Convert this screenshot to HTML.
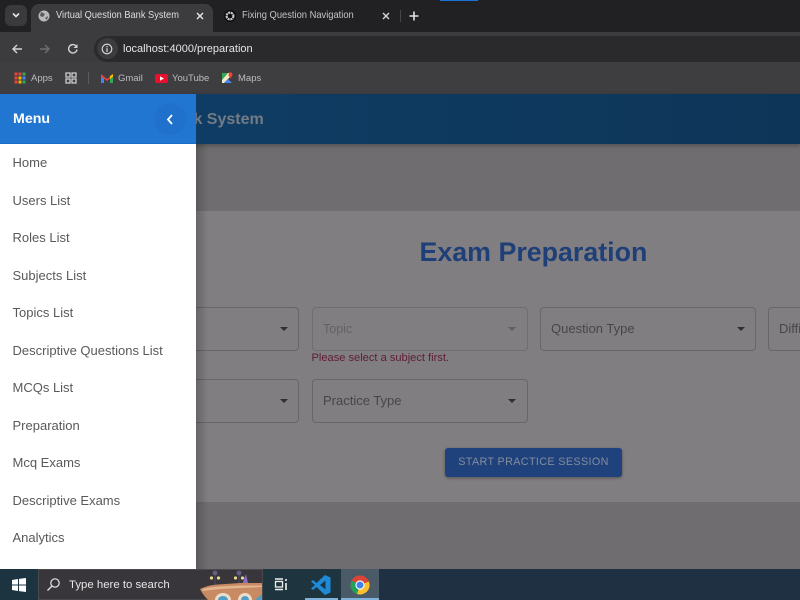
<!DOCTYPE html>
<html><head><meta charset="utf-8"><style>
*{box-sizing:border-box;margin:0;padding:0}
html,body{width:800px;height:600px;overflow:hidden;background:#6f6d6f;font-family:"Liberation Sans",sans-serif}
.a{position:absolute}
.t{position:absolute;white-space:nowrap}
.sx{transform-origin:0 50%;transform:scaleX(.9)}
.field{position:absolute;border:1px solid #68666a;border-radius:4px;height:44px}
.caret{position:absolute;width:0;height:0;border-left:4px solid transparent;border-right:4px solid transparent;border-top:4px solid #2f2e31}
.lbl{position:absolute;font-size:14px;line-height:16px;color:#464548;white-space:nowrap}
.m{position:absolute;left:12.5px;font-size:13px;line-height:16px;color:#595959;white-space:nowrap}
.bm{position:absolute;top:71.5px;font-size:9.5px;line-height:14px;color:#bdbcbd;white-space:nowrap}
</style></head><body>
<!-- tab strip -->
<div class="a" style="left:0;top:0;width:800px;height:32px;background:#212023"></div>
<div class="a" style="left:440px;top:0;width:38px;height:1px;background:#1a73d8"></div>
<div class="a" style="left:5px;top:5px;width:22px;height:21px;background:#3a393c;border-radius:6px"></div>
<svg class="a" style="left:11px;top:12px" width="10" height="7"><path d="M2 1.5 L5 4.5 L8 1.5" stroke="#e6e6e6" stroke-width="1.6" fill="none"/></svg>
<div class="a" style="left:31px;top:4px;width:182px;height:28px;background:#3c3b3e;border-radius:8px 8px 0 0"></div>
<svg class="a" style="left:38px;top:10px" width="12" height="12"><circle cx="6" cy="6" r="5.5" fill="#b9b9ba"/><path d="M3 2 L7 4 L5 7 L2 6Z M7 8 L10 6 L9 10Z" fill="#5a595c"/></svg>
<div class="t sx" style="left:56px;top:9px;font-size:10.3px;line-height:14px;color:#dedede">Virtual Question Bank System</div>
<svg class="a" style="left:195px;top:11px" width="10" height="10"><path d="M2 2 L8 8 M8 2 L2 8" stroke="#e8e8e8" stroke-width="1.4"/></svg>
<svg class="a" style="left:224px;top:10px" width="12" height="12"><circle cx="6" cy="6" r="6" fill="#0d0d0d"/><circle cx="6" cy="6" r="3.4" fill="none" stroke="#c4c4c4" stroke-width="2.2" stroke-dasharray="2.2 .6"/></svg>
<div class="t sx" style="left:242px;top:9px;font-size:10.4px;line-height:14px;color:#c4c4c5">Fixing Question Navigation</div>
<svg class="a" style="left:381px;top:11px" width="10" height="10"><path d="M2 2 L8 8 M8 2 L2 8" stroke="#d8d8d8" stroke-width="1.4"/></svg>
<div class="a" style="left:400px;top:10px;width:1px;height:12px;background:#47464a"></div>
<svg class="a" style="left:408px;top:10px" width="12" height="12"><path d="M6 1.5 V10.5 M1.5 6 H10.5" stroke="#e2e2e2" stroke-width="1.6"/></svg>
<!-- toolbar -->
<div class="a" style="left:0;top:32px;width:800px;height:30px;background:#3c3b3e"></div>
<svg class="a" style="left:11px;top:43px" width="12" height="12"><path d="M11 6 H2 M6 2 L2 6 L6 10" stroke="#d4d4d4" stroke-width="1.4" fill="none"/></svg>
<svg class="a" style="left:39px;top:43px" width="12" height="12"><path d="M1 6 H10 M6 2 L10 6 L6 10" stroke="#6f6e71" stroke-width="1.4" fill="none"/></svg>
<svg class="a" style="left:67px;top:43px" width="12" height="12"><path d="M10 6.5 A4.2 4.2 0 1 1 8.8 2.8" stroke="#d4d4d4" stroke-width="1.4" fill="none"/><path d="M10.5 1 V5 H6.5Z" fill="#d4d4d4"/></svg>
<div class="a" style="left:94px;top:36px;width:706px;height:26px;background:#2a292c;border-radius:13px 0 0 13px"></div>
<div class="a" style="left:97px;top:38px;width:21px;height:21px;background:#3c3b3e;border-radius:50%"></div>
<svg class="a" style="left:101px;top:43px" width="12" height="12"><circle cx="6" cy="6" r="4.8" stroke="#dcdcdc" stroke-width="1.1" fill="none"/><path d="M6 5.2 V9 M6 3 V4.2" stroke="#dcdcdc" stroke-width="1.2"/></svg>
<div class="t" style="left:123px;top:42px;font-size:11px;line-height:14px;color:#e6e6e6">localhost:4000/preparation</div>
<!-- bookmarks -->
<div class="a" style="left:0;top:62px;width:800px;height:32px;background:#3e3d40"></div>
<svg class="a" style="left:14px;top:72px" width="12" height="12"><path d="M.5 .5h3v3h-3zM.5 4.5h3v3h-3zM.5 8.5h3v3h-3z" fill="#e8453c"/><path d="M4.5 .5h3v3h-3z" fill="#e8453c"/><path d="M4.5 4.5h3v3h-3zM4.5 8.5h3v3h-3z" fill="#f4b400"/><path d="M8.5 .5h3v3h-3z" fill="#34a853"/><path d="M8.5 4.5h3v3h-3z" fill="#4285f4"/><path d="M8.5 8.5h3v3h-3z" fill="#34a853"/></svg>
<div class="bm" style="left:31px">Apps</div>
<svg class="a" style="left:65px;top:72px" width="12" height="12"><path d="M1 1h4v4H1zM7 1h4v4H7zM1 7h4v4H1zM7 7h4v4H7z" stroke="#cfcfcf" stroke-width="1.3" fill="none"/></svg>
<div class="a" style="left:88px;top:72px;width:1px;height:12px;background:#5b5a5d"></div>
<svg class="a" style="left:101px;top:73px" width="12" height="10"><path d="M0 1 V10 H3 V4Z" fill="#4285f4"/><path d="M12 1 V10 H9 V4Z" fill="#34a853"/><path d="M0 1 L6 6 L12 1 V3.5 L6 8 L0 3.5Z" fill="#ea4335"/><path d="M9 3 L12 1 V3.5 L9 6Z" fill="#fbbc04"/></svg>
<div class="bm" style="left:118px">Gmail</div>
<div class="a" style="left:155px;top:74px;width:13px;height:9px;background:#e8102a;border-radius:2px"></div>
<svg class="a" style="left:155px;top:74px" width="13" height="9"><path d="M5 2.2 L9 4.5 L5 6.8Z" fill="#fff"/></svg>
<div class="bm" style="left:172px">YouTube</div>
<svg class="a" style="left:221px;top:72px" width="12" height="12"><path d="M1 1H7L1 8Z" fill="#34a853"/><path d="M1 8L7 1H11V3L3 11H1Z" fill="#f2e9c8"/><path d="M3 11 L7 7 L11 11Z" fill="#4285f4"/><path d="M8 0.5 A2.5 2.5 0 0 1 11.5 3 L9.5 6.5 L7.5 3.5Z" fill="#ea4335"/></svg>
<div class="bm" style="left:238px">Maps</div>
<!-- app bar -->
<div class="a" style="left:0;top:94px;width:800px;height:50px;background:linear-gradient(90deg,#103f68,#0d3558);box-shadow:0 2px 4px rgba(0,0,0,.25)"></div>
<div class="t" style="left:35.5px;top:110px;font-size:16px;font-weight:bold;line-height:20px;color:#737b85">Virtual Question Bank System</div>
<!-- card -->
<div class="a" style="left:196px;top:211px;width:604px;height:291px;background:#807e81"></div>
<div class="t" style="left:419.5px;top:236px;font-size:26.8px;font-weight:bold;line-height:32px;color:#1f3f78">Exam Preparation</div>
<div class="field" style="left:150px;top:307px;width:149px"></div><div class="caret" style="left:280px;top:327px"></div>
<div class="field" style="left:312px;top:307px;width:216px;border-color:#6f6d71"></div>
<div class="lbl" style="left:323px;top:320.5px;font-size:12.5px;color:#636266">Topic</div><div class="caret" style="left:508px;top:327px;border-top-color:#605f63"></div>
<div class="t" style="left:311.5px;top:352px;font-size:11.1px;line-height:13px;color:#601c34">Please select a subject first.</div>
<div class="field" style="left:540px;top:307px;width:216px"></div>
<div class="lbl" style="left:551px;top:320.5px;font-size:13px">Question Type</div><div class="caret" style="left:737px;top:327px"></div>
<div class="field" style="left:768px;top:307px;width:60px"></div>
<div class="lbl" style="left:779px;top:320.5px;font-size:13px">Difficulty</div>
<div class="field" style="left:150px;top:379px;width:149px"></div><div class="caret" style="left:280px;top:399px"></div>
<div class="field" style="left:312px;top:379px;width:216px"></div>
<div class="lbl" style="left:323px;top:392.5px;font-size:13px">Practice Type</div><div class="caret" style="left:508px;top:399px"></div>
<div class="a" style="left:445px;top:448px;width:177px;height:29px;background:#20427c;border-radius:3px;box-shadow:0 1px 3px rgba(0,0,0,.35)"></div>
<div class="t" style="left:445px;top:448px;width:177px;height:28px;text-align:center;font-size:10.8px;line-height:28px;letter-spacing:.35px;color:#838c9e">START PRACTICE SESSION</div>
<!-- drawer -->
<div class="a" style="left:196px;top:144px;width:12px;height:425px;background:linear-gradient(90deg,rgba(0,0,0,.2),rgba(0,0,0,0))"></div>
<div class="a" style="left:0;top:94px;width:196px;height:475px;background:#fff"></div>
<div class="a" style="left:0;top:94px;width:196px;height:50px;background:#2176d2;border-bottom:1px solid #1c6cc8"></div>
<div class="t" style="left:13px;top:111px;font-size:14.2px;font-weight:bold;line-height:17px;color:#fff">Menu</div>
<div class="a" style="left:154px;top:103px;width:32px;height:32px;border-radius:50%;background:#2071cc"></div>
<svg class="a" style="left:165px;top:113px" width="10" height="13"><path d="M7 2 L3 6.5 L7 11" stroke="#fff" stroke-width="1.8" fill="none"/></svg>
<div class="m" style="top:155px">Home</div>
<div class="m" style="top:193px">Users List</div>
<div class="m" style="top:230px">Roles List</div>
<div class="m" style="top:268px">Subjects List</div>
<div class="m" style="top:305px">Topics List</div>
<div class="m" style="top:343px">Descriptive Questions List</div>
<div class="m" style="top:380px">MCQs List</div>
<div class="m" style="top:418px">Preparation</div>
<div class="m" style="top:455px">Mcq Exams</div>
<div class="m" style="top:493px">Descriptive Exams</div>
<div class="m" style="top:530px">Analytics</div>
<!-- taskbar -->
<div class="a" style="left:0;top:569px;width:800px;height:31px;background:#1f3042"></div>
<div class="a" style="left:0;top:569px;width:38px;height:31px;background:#1c3340"></div>
<div class="a" style="left:263px;top:569px;width:78px;height:31px;background:#1e3540"></div>
<svg class="a" style="left:12px;top:578px" width="14" height="14"><path d="M0 2 L6 1 V6.5 H0Z M7 .9 L14 0 V6.5 H7Z M0 7.5 H6 V13 L0 12Z M7 7.5 H14 V14 L7 13.1Z" fill="#fff"/></svg>
<div class="a" style="left:38px;top:569px;width:225px;height:31px;background:#38363a;border:1px solid #4a494d"></div>
<svg class="a" style="left:46px;top:577px" width="15" height="15"><circle cx="9" cy="6" r="4.2" stroke="#e4e4e4" stroke-width="1.2" fill="none"/><path d="M6 9 L1.5 13.5" stroke="#e4e4e4" stroke-width="1.3"/></svg>
<div class="t" style="left:69px;top:577px;font-size:11.4px;line-height:16px;color:#e6e6e6">Type here to search</div>
<svg class="a" style="left:200px;top:570px" width="62" height="30">
<path d="M46 4 L48 13 H57 L58 15 H42Z" fill="#8a6cc4"/>
<path d="M15 4v11M39 4v10" stroke="#4c4058" stroke-width="1.6"/>
<circle cx="15" cy="3" r="2.4" fill="#6c5c88"/><circle cx="39" cy="3" r="2.4" fill="#6c5c88"/>
<circle cx="11.5" cy="8" r="1.6" fill="#e8d88a"/><circle cx="18.5" cy="8" r="1.6" fill="#e8d88a"/><circle cx="35.5" cy="8" r="1.6" fill="#e8d88a"/><circle cx="42.5" cy="8" r="1.6" fill="#e8d88a"/>
<path d="M0 19 Q8 15 18 14.5 L40 13 L62 13 V24 L58 30 H8 Q3 25 0 19Z" fill="#c78a62"/>
<path d="M2 19 Q10 17 20 16.5 L40 15.5 L62 15.5 V17 L40 18 L20 19 Q10 20 3 21Z" fill="#e3b690"/>
<path d="M15 30 A8 7 0 0 1 31 30Z M38 30 A7 7 0 0 1 52 30Z" fill="#ecdcc8"/>
<path d="M18 30 A5 4 0 0 1 28 30Z M41 30 A4 4 0 0 1 49 30Z M55 30 L62 24 V30Z" fill="#4ca0c8"/>
</svg>
<svg class="a" style="left:274px;top:577px" width="15" height="15"><path d="M1 2H9M1 12.5H9" stroke="#f0f0f0" stroke-width="1.4"/><rect x="1.5" y="4.5" width="7" height="5.5" fill="none" stroke="#f0f0f0" stroke-width="1.3"/><path d="M12 2v2M12 6v7" stroke="#f0f0f0" stroke-width="1.6"/></svg>
<svg class="a" style="left:311px;top:575px" width="20" height="20"><path d="M14 0 L19.5 2.5 V17.5 L14 20 L5.5 12 L2 15 L0 13.5 L4 10 L0 6.5 L2 5 L5.5 8 Z M14.5 5.5 L9 10 L14.5 14.5Z" fill="#1f8ad8" fill-rule="evenodd"/></svg>
<div class="a" style="left:305px;top:598px;width:33px;height:2px;background:#7fb3dc"></div>
<div class="a" style="left:341px;top:569px;width:38px;height:31px;background:#4a5a66"></div>
<div class="a" style="left:341px;top:598px;width:38px;height:2px;background:#7fb3dc"></div>
<svg class="a" style="left:350px;top:575px" width="20" height="20"><circle cx="10" cy="10" r="9.5" fill="#dd4437"/><path d="M10 10 L1.6 5.5 A9.5 9.5 0 0 0 7 19 Z" fill="#1fa25a"/><path d="M10 10 L18.9 6.5 A9.5 9.5 0 0 1 7 19 Z" fill="#fbc02d"/><circle cx="10" cy="10" r="4.6" fill="#fff"/><circle cx="10" cy="10" r="3.5" fill="#3f84ec"/></svg>
</body></html>
